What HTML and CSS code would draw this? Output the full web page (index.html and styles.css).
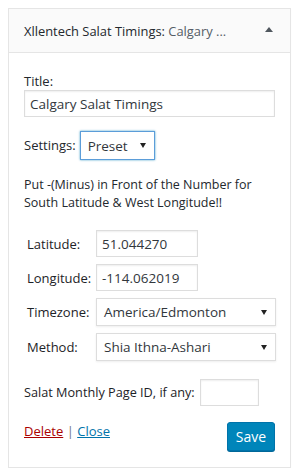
FILE: index.html
```html
<!DOCTYPE html>
<html>
<head>
<meta charset="utf-8">
<link rel="stylesheet" href="styles.css">
</head>
<body>
<div class="widget">
  <div class="widget-top">
    <h3 class="widget-title">Xllentech Salat Timings: <span class="in-title">Calgary ...</span></h3>
    <span class="toggle"></span>
  </div>
  <div class="widget-inside">
    <div class="field">
      <label class="lbl">Title:</label>
      <input class="text wide" type="text" value="Calgary Salat Timings">
    </div>
    <div class="field inline">
      <label class="lbl">Settings:</label>
      <div class="sel sel-focus preset"><span class="val">Preset</span><span class="arr"></span></div>
    </div>
    <p class="note">Put -(Minus) in Front of the Number for South Latitude &amp; West Longitude!!</p>
    <div class="grid">
      <label class="glbl">Latitude:</label>
      <input class="text short" type="text" value="51.044270">
      <label class="glbl">Longitude:</label>
      <input class="text short" type="text" value="-114.062019">
      <label class="glbl">Timezone:</label>
      <div class="sel long"><span class="val">America/Edmonton</span><span class="arr"></span></div>
      <label class="glbl">Method:</label>
      <div class="sel long"><span class="val">Shia Ithna-Ashari</span><span class="arr"></span></div>
    </div>
    <div class="field inline page">
      <label class="lbl plbl">Salat Monthly Page ID, if any:</label>
      <input class="text tiny" type="text" value="">
    </div>
    <div class="actions">
      <div class="links"><a class="del" href="#">Delete</a> <span class="sep">|</span> <a class="close" href="#">Close</a></div>
      <button class="save">Save</button>
    </div>
  </div>
</div>
</body>
</html>
```
FILE: styles.css
```css
html, body { background: #fff; }
body {
  margin: 8px;
  font-family: "Open Sans", "Noto Sans", sans-serif;
  font-size: 13px;
  color: #23282d;
}
.widget {
  width: 281px;
  border: 1px solid #e5e5e5;
  background: #fff;
  box-shadow: 0 1px 1px rgba(0,0,0,0.04);
}
.widget-top {
  height: 43px;
  background: #fafafa;
  border-bottom: 1px solid #e5e5e5;
  display: flex;
  align-items: center;
  justify-content: space-between;
  padding: 0 17px 0 15px;
}
.widget-title {
  margin: 0;
  font-size: 12.9px;
  font-weight: 400;
  color: #23282d;
  white-space: nowrap;
  padding-top: 1px;
}
.in-title { color: #555d66; }
.toggle {
  width: 0; height: 0;
  border-left: 4px solid transparent;
  border-right: 4px solid transparent;
  border-bottom: 5px solid #50575e;
  margin-top: -2px;
}
.widget-inside { padding: 21px 15px 16px; }
.field { margin-bottom: 14px; }
.lbl { display: block; line-height: 15px; }
.inline { display: flex; align-items: center; gap: 4px; }
.text {
  box-sizing: border-box;
  font-family: inherit;
  font-size: 13.5px;
  color: #32373c;
  border: 1px solid #ddd;
  box-shadow: inset 0 1px 2px rgba(0,0,0,0.07);
  padding: 3px 5px;
  height: 27px;
  margin: 0;
  background: #fff;
}
.wide { width: 100%; margin-top: 1px; }
.sel {
  box-sizing: border-box;
  height: 28px;
  border: 1px solid #ddd;
  box-shadow: 0 1px 2px rgba(0,0,0,0.07);
  display: flex;
  align-items: center;
  justify-content: space-between;
  padding: 0 8px 0 7px;
  font-size: 13.5px;
  color: #32373c;
  background: #fff;
}
.sel-focus { border-color: #5b9dd9; box-shadow: 0 0 2px rgba(30,140,190,0.8); }
.preset { width: 75px; height: 29px; }
.arr {
  width: 0; height: 0;
  border-left: 3px solid transparent;
  border-right: 3px solid transparent;
  border-top: 5px solid #222;
}
.note { margin: 16px 0 18px; line-height: 18px; font-size: 12.5px; }
.grid {
  display: grid;
  grid-template-columns: 69px 180px;
  row-gap: 7px;
  padding-left: 3px;
  align-items: center;
}
.glbl { line-height: 18px; font-weight: 500; color: #1d2327; }
.short { width: 102px; height: 27px; }
.long { width: 180px; }
.page { margin-top: 18px; margin-bottom: 10px; gap: 5px; }
.plbl { font-size: 12.7px; font-weight: 500; color: #1d2327; }
.tiny { width: 59px; height: 27px; }
.actions { display: flex; justify-content: space-between; align-items: flex-start; }
.links { padding-top: 5px; line-height: 20px; }
.del { color: #a00; }
.close { color: #0073aa; }
.sep { color: #72777c; }
.save {
  font-family: inherit;
  font-size: 14px;
  color: #fff;
  background: #0085ba;
  border: 1px solid #0073aa;
  border-radius: 3px;
  box-shadow: 0 1px 0 #006799;
  height: 29px;
  width: 48px;
  padding: 0;
  margin-top: 6px;
}
```
